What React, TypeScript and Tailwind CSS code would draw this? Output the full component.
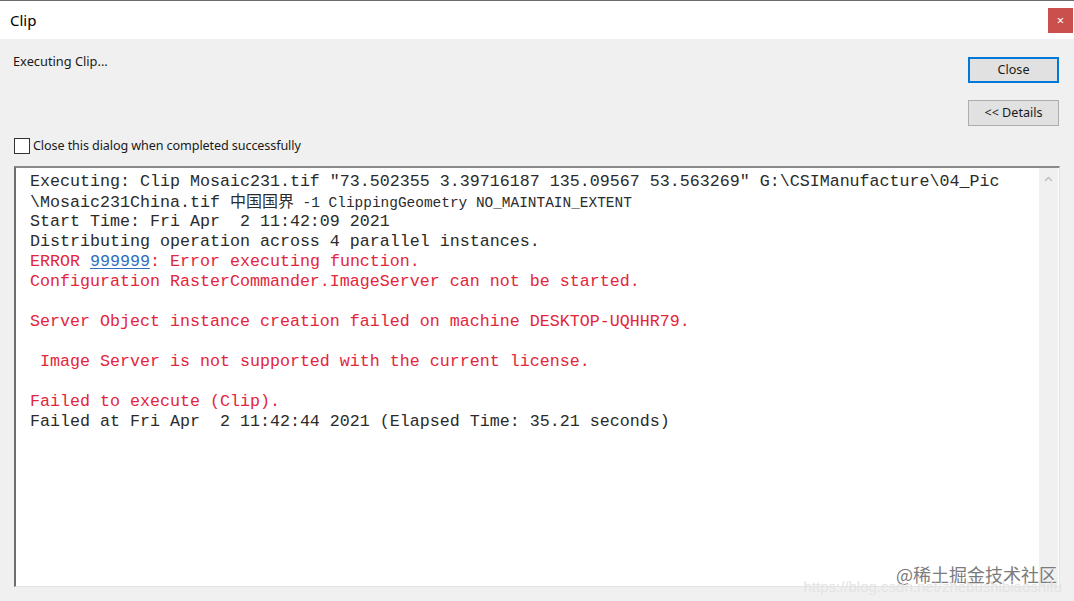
import React from "react";

const mono = { fontFamily: '"Liberation Mono", "Courier New", monospace' };

export default function App() {
  const red = "text-[#e3263c] h-[20px]";
  const dark = "text-[#2b2b2b] h-[20px]";
  return (
    <div
      className="w-[1074px] h-[601px] overflow-hidden bg-[#f0f0f0] flex flex-col relative"
      style={{ fontFamily: '"Noto Sans", "Open Sans", sans-serif' }}
    >
      {/* title bar */}
      <div className="h-[39px] bg-white border-t border-[#6b6b6b] flex items-center justify-between pl-[10px] pr-[1px] shrink-0">
        <span className="text-[15px] text-black leading-none">Clip</span>
        <div className="w-[25px] h-[25px] bg-[#c9504d] flex items-center justify-center text-white text-[13px] leading-none">
          ×
        </div>
      </div>

      {/* header area */}
      <div className="flex justify-between items-start pl-[13px] pr-[15px] h-[127px] shrink-0">
        <div className="flex flex-col pt-[16px]">
          <span className="text-[12.8px] text-[#1a1a1a] leading-[12px] h-[12px]">Executing Clip...</span>
          <label className="flex items-center gap-[3px] mt-[71px] ml-[1px]">
            <span className="w-[16px] h-[16px] bg-white border border-[#333] block" />
            <span className="text-[12.6px] text-[#1a1a1a] leading-none tracking-[-0.1px]">Close this dialog when completed successfully</span>
          </label>
        </div>
        <div className="flex flex-col gap-[17px] pt-[18px]">
          <div className="w-[91px] h-[26px] bg-[#e1e1e1] border-2 border-[#0078d7] flex items-center justify-center text-[12.6px] text-[#1a1a1a]">
            Close
          </div>
          <div className="w-[91px] h-[26px] bg-[#e1e1e1] border border-[#adadad] flex items-center justify-center text-[12.6px] text-[#1a1a1a]">
            &lt;&lt; Details
          </div>
        </div>
      </div>

      {/* log box */}
      <div className="ml-[14px] w-[1046px] h-[421px] border-t-2 border-l-2 border-t-[#8a8a8a] border-l-[#6e6e6e] border-b border-r border-b-[#e3e3e3] border-r-[#e3e3e3] bg-white flex">
        <div className="flex-1 pl-[14px] pt-[4px] text-[16.66px] leading-[20px] whitespace-pre" style={mono}>
          <div className={dark}>Executing: Clip Mosaic231.tif "73.502355 3.39716187 135.09567 53.563269" G:\CSIManufacture\04_Pic</div>
          <div className={dark}>
            \Mosaic231China.tif{" "}
            <span className="text-[16px] leading-none" style={{ fontFamily: '"Noto Sans CJK SC", sans-serif' }}>中国国界</span>
            <span className="text-[14.45px] leading-none"> -1 ClippingGeometry NO_MAINTAIN_EXTENT</span>
          </div>
          <div className={dark}>Start Time: Fri Apr  2 11:42:09 2021</div>
          <div className={dark}>Distributing operation across 4 parallel instances.</div>
          <div className={red}>
            ERROR <span className="text-[#2f6fc4] underline underline-offset-2">999999</span>: Error executing function.
          </div>
          <div className={red}>Configuration RasterCommander.ImageServer can not be started.</div>
          <div className="h-[20px]">&nbsp;</div>
          <div className={red}>Server Object instance creation failed on machine DESKTOP-UQHHR79.</div>
          <div className="h-[20px]">&nbsp;</div>
          <div className={red}> Image Server is not supported with the current license.</div>
          <div className="h-[20px]">&nbsp;</div>
          <div className={red}>Failed to execute (Clip).</div>
          <div className={dark}>Failed at Fri Apr  2 11:42:44 2021 (Elapsed Time: 35.21 seconds)</div>
        </div>
        <div className="w-[19px] bg-[#f0f0f0] flex justify-center pt-[8px] mr-[1px]">
          <svg width="9" height="6" viewBox="0 0 9 6">
            <path d="M1 5 L4.5 1.5 L8 5" stroke="#bdbdbd" strokeWidth="1.3" fill="none" />
          </svg>
        </div>
      </div>

      {/* watermark */}
      <div className="absolute right-[17px] bottom-[18px] text-[18px] leading-none text-[#7c7c7c]" style={{ fontFamily: '"Noto Sans CJK SC", sans-serif' }}>
        @稀土掘金技术社区
      </div>
      <div className="absolute right-[12px] bottom-[7px] text-[15px] leading-none text-[#e4e4e4]" style={{ fontFamily: '"Liberation Sans", sans-serif' }}>
        https://blog.csdn.net/zhebushibiaoshifu
      </div>
    </div>
  );
}
